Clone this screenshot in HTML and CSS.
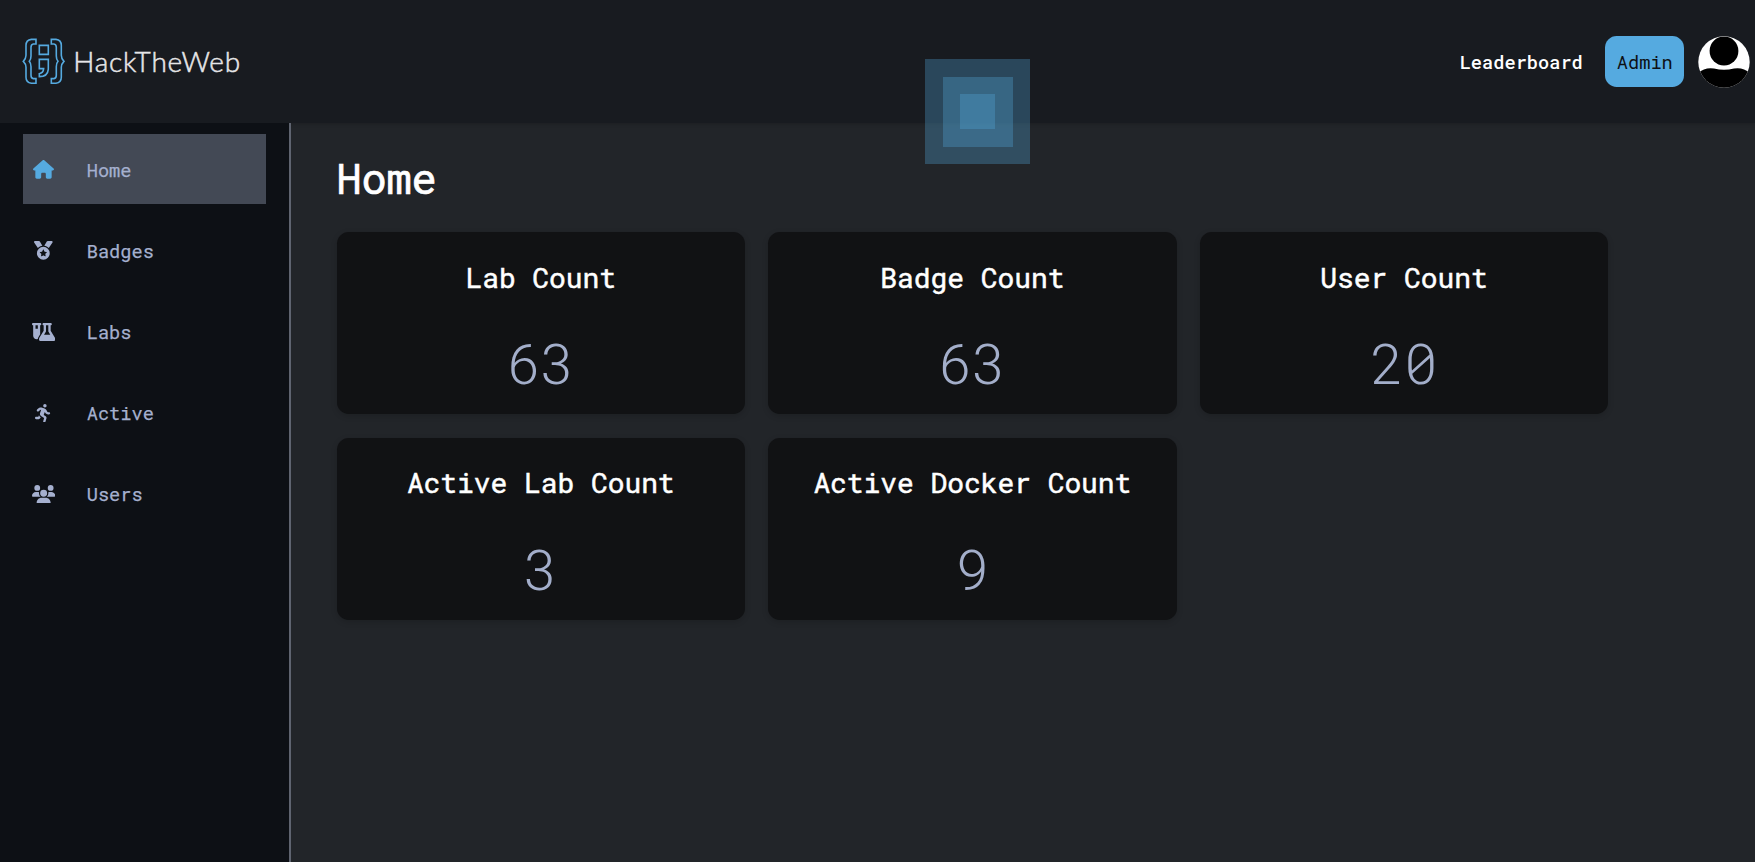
FILE: index.html
```html
<!DOCTYPE html>
<html lang="en">
<head>
<meta charset="utf-8">
<title>HackTheWeb</title>
<link rel="stylesheet" href="styles.css">
</head>
<body>
<header class="topbar">
  <a class="brand">
    <svg class="brand-mark" viewBox="66 54 130 140">
      <path d="M108 58H94Q78 60 78 76V106Q78 116 70 124Q78 132 78 142V172Q78 188 94 190H108V176H100Q93 175 93 166V140Q93 130 88 124Q93 118 93 108V82Q93 73 100 72H108Z"/>
      <path d="M154 58H168Q184 60 184 76V106Q184 116 192 124Q184 132 184 142V172Q184 188 168 190H154V176H162Q169 175 169 166V140Q169 130 174 124Q169 118 169 108V82Q169 73 162 72H154Z"/>
      <path d="M118 76H145V103H118ZM118 118H145V148Q143 170 118 170V161Q130 159 131 146H118Z"/>
    </svg>
    <span class="brand-name">HackTheWeb</span>
  </a>
  <nav class="topnav">
    <a class="top-link">Leaderboard</a>
    <a class="admin">Admin</a>
    <svg class="avatar" viewBox="0 0 52 52">
      <defs><clipPath id="disc"><circle cx="26" cy="26" r="25.7"/></clipPath></defs>
      <circle cx="26" cy="26" r="25.7" fill="#fff"/>
      <g clip-path="url(#disc)"><circle cx="26" cy="15" r="14.4"/><path d="M0 52V37Q7 31 16 32.500Q26 35 36 32.500Q45 31 52 37V52Z"/></g>
    </svg>
  </nav>
</header>
<div class="layout">
  <aside class="sidebar">
    <a class="item active"><svg viewBox="0 0 576 512"><path d="M575.8 255.5c0 18-15 32.100-32 32.100h-32l.7 160.200c0 2.700-.2 5.400-.5 8.100V472c0 22.100-17.900 40-40 40H392c-22.100 0-40-17.900-40-40V384c0-17.700-14.300-32-32-32H256c-17.700 0-32 14.300-32 32v88c0 22.100-17.900 40-40 40H104c-22.100 0-40-17.900-40-40V287.600H32c-18 0-32-14-32-32.100c0-9 3-17 10-24L266.400 8c7-7 15-8 22-8s15 2 21 7L564.800 231.500c8 7 12 15 11 24z"/></svg><span>Home</span></a>
    <a class="item"><svg viewBox="0 0 512 512"><path d="M4.1 38.2C1.4 34.2 0 29.4 0 24.6C0 11 11 0 24.6 0H133.9c11.2 0 21.7 5.9 27.4 15.5l68.5 114.1c-48.2 6.1-91.3 28.6-123.4 61.9L4.1 38.2zm503.7 0L405.6 191.5c-32.1-33.3-75.2-55.8-123.4-61.9L350.7 15.5C356.5 5.9 366.9 0 378.1 0H487.4C501 0 512 11 512 24.6c0 4.8-1.4 9.6-4.1 13.6zM80 336a176 176 0 1 1 352 0A176 176 0 1 1 80 336zm184.4-94.9c-3.4-7-13.3-7-16.8 0l-22.4 45.4c-1.4 2.8-4 4.700-7 5.100L168 298.900c-7.700 1.100-10.700 10.500-5.200 16l36.300 35.400c2.200 2.200 3.200 5.200 2.700 8.300l-8.600 49.900c-1.300 7.600 6.700 13.500 13.600 9.900l44.800-23.600c2.700-1.400 6-1.400 8.700 0l44.800 23.600c6.900 3.600 14.900-2.200 13.600-9.900l-8.600-49.900c-.5-3 .5-6.100 2.700-8.300l36.300-35.400c5.600-5.400 2.500-14.800-5.200-16l-50.100-7.300c-3-.4-5.700-2.400-7-5.100l-22.400-45.400z"/></svg><span>Badges</span></a>
    <a class="item"><svg viewBox="0 0 640 512"><path d="M175 389.4c-9.8 16-15 34.3-15 53.1c-10 3.5-20.8 5.5-32 5.5c-53 0-96-43-96-96V64C14.3 64 0 49.7 0 32S14.3 0 32 0H224c17.7 0 32 14.3 32 32s-14.3 32-32 32V309.9l-49 79.600zM96 64v96h64V64H96zM352 0H512c17.7 0 32 14.3 32 32s-14.3 32-32 32V214.9L629.7 406.2c6.7 10.9 10.3 23.5 10.3 36.4c0 38.3-31.1 69.4-69.4 69.4H261.4c-38.3 0-69.4-31.1-69.4-69.4c0-12.8 3.6-25.4 10.3-36.4L320 214.9V64c-17.7 0-32-14.3-32-32s14.3-32 32-32h32zm32 64V224c0 5.9-1.6 11.7-4.7 16.8L330.5 320h171l-48.8-79.2c-3.1-5-4.7-10.8-4.7-16.8V64H384z"/></svg><span>Labs</span></a>
    <a class="item"><svg viewBox="0 0 448 512"><path d="M320 48a48 48 0 1 0 -96 0 48 48 0 1 0 96 0zM125.7 175.5c9.9-9.9 23.4-15.5 37.5-15.5c1.9 0 3.8 .1 5.6 .3L137.6 254c-9.3 28 1.7 58.8 26.8 74.5l86.2 53.9-25.4 88.8c-4.9 17 5 34.7 22 39.6s34.7-5 39.6-22l28.7-100.4c5.9-20.6-2.6-42.6-20.7-53.9L238 299l30.9-82.4 5.100 12.3C289 264.7 323.9 288 362.7 288H384c17.7 0 32-14.3 32-32s-14.3-32-32-32H362.7c-12.9 0-24.6-7.8-29.5-19.7l-6.3-15c-14.6-35.1-44.1-61.9-80.5-73.1l-48.7-15c-11.1-3.4-22.7-5.2-34.4-5.2c-31 0-60.8 12.3-82.7 34.3L57.4 153.4c-12.5 12.5-12.5 32.8 0 45.3s32.8 12.5 45.3 0l23.1-23.1zM91.2 352H32c-17.7 0-32 14.3-32 32s14.3 32 32 32h69.600c19 0 36.2-11.2 43.900-28.500L157 361.600l-9.500-6c-17.500-10.900-30.500-26.800-37.900-44.900L91.200 352z"/></svg><span>Active</span></a>
    <a class="item"><svg viewBox="0 0 640 512"><path d="M144 0a80 80 0 1 1 0 160A80 80 0 1 1 144 0zM512 0a80 80 0 1 1 0 160A80 80 0 1 1 512 0zM0 298.7C0 239.8 47.8 192 106.7 192h42.7c15.9 0 31 3.5 44.6 9.7c-1.3 7.2-1.9 14.7-1.9 22.3c0 38.2 16.8 72.5 43.3 96H21.3C9.6 320 0 310.4 0 298.7zM405.3 320c26.6-23.5 43.3-57.8 43.3-96c0-7.6-.7-15-1.9-22.3c13.6-6.3 28.7-9.7 44.6-9.7h42.7C592.2 192 640 239.8 640 298.7c0 11.8-9.6 21.3-21.3 21.3H405.3zM224 224a96 96 0 1 1 192 0 96 96 0 1 1 -192 0zM128 485.3C128 411.7 187.7 352 261.3 352H378.7C452.3 352 512 411.7 512 485.3c0 14.7-11.9 26.7-26.7 26.7H154.7c-14.7 0-26.7-11.9-26.7-26.7z"/></svg><span>Users</span></a>
  </aside>
  <main class="content">
    <h1 class="title">Home</h1>
    <section class="cards">
      <article class="card"><h2>Lab Count</h2><p>63</p></article>
      <article class="card"><h2>Badge Count</h2><p>63</p></article>
      <article class="card"><h2>User Count</h2><p>20</p></article>
      <article class="card"><h2>Active Lab Count</h2><p>3</p></article>
      <article class="card"><h2>Active Docker Count</h2><p>9</p></article>
    </section>
  </main>
</div>
<div class="pulse"><div class="pulse-mid"><div class="pulse-core"></div></div></div>
</body>
</html>
```

FILE: styles.css
```css
* { box-sizing: border-box; }
body {
  margin: 0;
  height: 862px;
  display: flex;
  flex-direction: column;
  overflow: hidden;
  background: #222529;
  color: #fff;
  font: 18.67px/25px "Roboto Mono", "DejaVu Sans Mono", monospace;
}
.topbar {
  flex: none;
  height: 123px;
  display: flex;
  align-items: center;
  justify-content: space-between;
  padding: 0 5px 0 22px;
  background: #181b20;
  box-shadow: 0 1px 4px rgba(0, 0, 0, .2);
}
.brand { display: flex; align-items: center; gap: 8px; }
.brand-mark { width: 43.3px; height: 46.7px; fill: none; stroke: #55aae0; stroke-width: 4.8; }
.brand-name {
  font: 300 28px/36px Lato, sans-serif;
  letter-spacing: .8px;
  color: #e6e6e8;
  -webkit-text-stroke: .5px #e6e6e8;
  padding-bottom: 2px;
}
.topnav { display: flex; align-items: center; }
.top-link { margin-right: 22.500px; font-weight: 500; }
.admin {
  width: 79px;
  height: 51px;
  line-height: 51px;
  margin-right: 13.700px;
  border-radius: 11.700px;
  background: #55aae0;
  color: #0d1015;
  text-align: center;
}
.avatar { width: 52px; height: 52px; }
.layout { flex: 1; display: flex; }
.sidebar {
  width: 291px;
  flex: none;
  display: flex;
  flex-direction: column;
  gap: 11.3px;
  padding: 11.3px 23px;
  background: #0d1015;
  border-right: 2px solid #5f6470;
}
.item {
  display: grid;
  grid-template-columns: 41px 1fr;
  column-gap: 22.700px;
  align-items: center;
  height: 69.8px;
  color: #a5b0cf;
}
.item svg { height: 18.67px; margin-top: 1px; justify-self: center; fill: currentColor; }
.item span { padding-top: .5px; -webkit-text-stroke: .25px currentColor; }
.active { background: #434955; }
.active svg { color: #55aae0; }
.content { padding: 27px 45.600px; }
.title { margin: 0 0 26px; font-size: 42px; line-height: 56px; font-weight: 400; letter-spacing: -.2px; -webkit-text-stroke: .7px #fff; }
.cards { display: grid; grid-template-columns: repeat(3, 408.3px); grid-auto-rows: 182.3px; gap: 23.33px; }
.card {
  padding: 26.600px 0 0;
  border-radius: 11.700px;
  background: #111214;
  box-shadow: 0 2px 6px rgba(0, 0, 0, .16);
  text-align: center;
}
.card h2 { margin: 0; font-size: 28px; line-height: 38px; font-weight: 400; letter-spacing: -.07px; -webkit-text-stroke: .5px #fff; }
.card p { margin: 28.3px 0 0; font-size: 56px; line-height: 74px; font-weight: 300; color: #a3aeca; }
.pulse, .pulse-mid, .pulse-core { display: grid; place-items: center; background: rgba(85, 170, 224, .31); }
.pulse { position: absolute; left: 925px; top: 59px; width: 105px; height: 105px; }
.pulse-mid { width: 70px; height: 70px; }
.pulse-core { width: 35px; height: 35px; }
```
